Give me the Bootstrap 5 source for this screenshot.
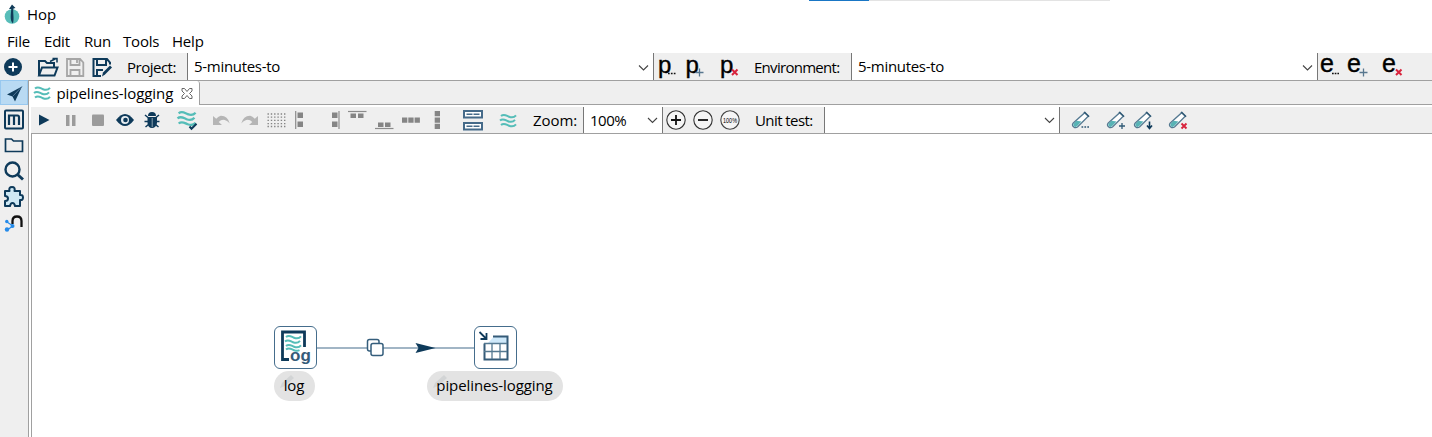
<!DOCTYPE html>
<html lang="en">
<head>
<meta charset="utf-8">
<title>Hop</title>
<link href="https://cdn.jsdelivr.net/npm/bootstrap@5.3.0/dist/css/bootstrap.min.css" rel="stylesheet">
<style>
:root{--navy:#0e3a5a;--teal:#5cc0bc;--bar:#efefef;--line:#a0a0a0}
body{font:15px/20px "Open Sans","Noto Sans",sans-serif;color:#000;height:437px;overflow:hidden;background:#fff}
svg{display:block;overflow:visible;stroke-width:2}
.titlebar{height:28px;position:relative}
.loading{position:absolute;left:809px;top:0;width:301px;height:1px;background:#e3e3e3}
.loading div{width:60px;height:1px;background:#1976c5}
.app-title{padding-left:7px;line-height:29px}
.menu{height:25px;padding-left:7px;letter-spacing:-.2px}
.menu span{line-height:26px;width:40px}
.menu .m1{width:37px}.menu .m3{width:39px}.menu .m4{width:49px}
.main-tools{height:27px;background:var(--bar);display:grid;grid-template-columns:31px 31px 27px 38px 60px 467px 27px 27px 46px 97px 467px 27px 27px 60px}
.tools{height:26px;background:var(--bar);display:grid;grid-template-columns:27px 27px 27px 27px 27px 40px 27px 27px 27px 27px 27px 27px 27px 27px 27px 36px 36px 12px 50px 80px 27px 27px 38px 69px 236px 40px 27px 27px 40px}
.label{line-height:28px;white-space:nowrap}
.tools .label{line-height:27px}
.t1{letter-spacing:-.5px}.t2{letter-spacing:-.71px}.t3{letter-spacing:-.57px}.t4{letter-spacing:-.3px}.t5{letter-spacing:-.07px}
.combo{background:#fff;border-left:1px solid #777;border-right:1px solid #777;padding:0 5px 0 6px}
.combo span{line-height:27px}
.tools .combo span{line-height:26px}
.side{width:29px;background:var(--bar);border-right:1px solid var(--line)}
.side svg{width:28px;height:26px}
.side .picked{background:#b9daf3;box-shadow:inset 0 0 0 1px #98c8ef;height:25px}
.editor{padding-left:2px;border-top:1px solid var(--line)}
.tabs{height:24px;background:var(--bar);border-bottom:1px solid var(--line);margin-left:-2px;margin-bottom:2px}
.filetab{width:171px;height:24px;background:#fff;border-right:1px solid var(--line);border-top-right-radius:3px}
.tabname{line-height:24px;width:124px;margin-left:-.5px;margin-right:.5px}
.canvas{position:relative;border-top:1px solid var(--line);border-left:1px solid var(--line)}
.hops{position:absolute;left:0;top:0}
.node{position:absolute;width:43px;height:43px;border:1px solid #456d8c;border-radius:6px;background:#fff;top:192px}
.caption{position:absolute;top:237px;height:30px;border-radius:15px;background:#e3e3e3;line-height:29px;text-align:center;white-space:nowrap;letter-spacing:-.1px}
.caption svg{position:absolute;left:4px;top:2px}
.caption span{position:relative;left:-.5px}
.n1{left:242px}.n2{left:442px}
.c1{left:242px;width:41px}.c2{left:395px;width:136px}
.f{fill:var(--navy)}.s{fill:none;stroke:var(--navy)}
.piece{fill:#cfe9f5}
.g{fill:#9b9b9b}.gs{fill:none;stroke:#8b8b8b;stroke-width:1.2}
.big{font-family:"Liberation Sans",sans-serif}
.glyph{stroke:#000;stroke-width:.4px}
</style>
</head>
<body class="d-flex flex-column">
<svg width="0" height="0" class="position-absolute">
  <defs>
    <g id="waves" fill="none" stroke="#55bdb8" stroke-width="2"><path d="M1 2.500c3-2.500 5-.5 8 .7s5 1 7-1.300M0 7c3-2.500 5-.5 8 .7s5 1 7-1.300M1 11.500c3-2.500 5-.5 8 .7s5 1 7-1.300"/></g>
    <g id="tube"><path d="M13 1l3.500 3.500L5.500 15.500q-2 1.500-4-.3t-.2-3.700z" fill="#fff" stroke="#557991" stroke-width="1.300"/><path d="M4.500 9.300l5 .7L5 14.800q-1.500 1.200-3 0t-.2-2.700z" fill="#58b3b5"/><path d="M12 .5l5 4.700" stroke="#315a76" stroke-width="1.500"/></g>
    <path id="chev" d="M0 0l4.500 4.500L9 0" fill="none" stroke="#444" stroke-width="1.100"/>
    <path id="pencil" d="M2 15l2-5 9-8 3 3-9 8zM5 10l3 3" fill="#d2d4d5"/>
  </defs>
</svg>
<header class="titlebar d-flex">
  <svg width="20" height="28" viewBox="0 0 20 28"><circle cx="12" cy="16.500" r="7.300" fill="#58bdb9"/><path d="M9 9L12 4.500l3.500 3.500-2 .5c-1 4 1 9-.5 15-3.500-3-2-9.500-1.800-14.500z" fill="#113b59"/></svg>
  <span class="app-title">Hop</span>
  <div class="loading"><div></div></div>
</header>
<nav class="menu d-flex"><span class="m1">File</span><span>Edit</span><span class="m3">Run</span><span class="m4">Tools</span><span>Help</span></nav>
<div class="main-tools">
  <svg width="31" height="27" viewBox="0 53 31 27"><circle class="f" cx="13" cy="67" r="9"/><path d="M13 62.500v9M8.500 67h9" stroke="#fff" stroke-width="2"/></svg>
  <svg width="31" height="27" viewBox="31 53 31 27"><path class="s" d="M39 75V61h6l2 2h7v4M39 75.500l3-8h15.500l-3 8z"/><path class="s" d="M50 61.500l6-3M52.500 58.500H57v4" stroke-width="1.500"/></svg>
  <svg width="27" height="27" viewBox="62 53 27 27"><path d="M67 59h13l3.300 3.500V76H67zM70.500 59v6h9v-6M70.500 76v-6h9v6M77 60v3" fill="none" stroke="#a5a5a5" stroke-width="1.800"/></svg>
  <svg width="38" height="27" viewBox="89 53 38 27"><path class="s" d="M101 76h-7.500V59H107l3 3.500v2M97 59v6h9v-6M97 76v-6h6"/><path d="M102 76.500l1-4 7-7 2 2-7 7z" class="f"/></svg>
  <span class="label t1">Project:</span>
  <div class="combo d-flex justify-content-between"><span class="t4">5-minutes-to</span><svg width="9" height="27"><use href="#chev" y="12.500"/></svg></div>
  <svg width="27" height="27" viewBox="654 53 27 27"><text x="658" y="72.500" class="big glyph" font-size="24">p</text><path d="M668 73.500h8" stroke="#111" stroke-width="1.500" stroke-dasharray="1.700 1.200"/></svg>
  <svg width="27" height="27" viewBox="681 53 27 27"><text x="685.500" y="72.500" class="big glyph" font-size="24">p</text><path d="M695.500 72.500h8M699.500 68.500v8" stroke="#58778f" stroke-width="1.300"/></svg>
  <svg width="46" height="27" viewBox="708 53 46 27"><text x="720" y="72.500" class="big glyph" font-size="24">p</text><path d="M732 69.500l5.500 5.500m0-5.500L732 75" stroke="#d8243d" stroke-width="2"/></svg>
  <span class="label t2">Environment:</span>
  <div class="combo d-flex justify-content-between"><span class="t4">5-minutes-to</span><svg width="9" height="27"><use href="#chev" y="12.500"/></svg></div>
  <svg width="27" height="27" viewBox="1318 53 27 27"><text x="1320" y="72" class="big glyph" font-size="25">e</text><path d="M1332 73.500h7" stroke="#111" stroke-width="1.500" stroke-dasharray="1.700 1"/></svg>
  <svg width="27" height="27" viewBox="1345 53 27 27"><text x="1347" y="72" class="big glyph" font-size="25">e</text><path d="M1359.500 72.500h8M1363.500 68.500v8" stroke="#58778f" stroke-width="1.300"/></svg>
  <svg width="60" height="27" viewBox="1372 53 60 27"><text x="1382" y="72" class="big glyph" font-size="25">e</text><path d="M1396 69.500l5.500 5.500m0-5.500l-5.500 5.500" stroke="#d8243d" stroke-width="2"/></svg>
</div>
<div class="d-flex flex-grow-1">
  <aside class="side d-flex flex-column">
    <svg class="picked" viewBox="0 80 28 25"><path class="f" d="M22 86.500l-7 15-2.500-5-5.500-2z"/><path d="M13 96l9-9.500" stroke="#55799a" stroke-width="1"/></svg>
    <svg viewBox="0 105 28 26"><rect class="s" x="5" y="110.500" width="18" height="18" rx="1"/><path class="s" d="M9 125v-9.500h8.500q1.500 0 1.500 2v7.500M14 115v10" stroke-width="2.200"/></svg>
    <svg viewBox="0 131 28 26"><path class="s" d="M5.500 140v11.500h17V141h-9l-2-2h-6z" stroke-width="1.700"/></svg>
    <svg viewBox="0 157 28 26"><circle class="s" cx="12.500" cy="169.500" r="7" stroke-width="2.400"/><path class="s" d="M17.500 174.500l5.500 5" stroke-width="3"/></svg>
    <svg viewBox="0 183 28 26"><path class="s piece" stroke-linejoin="round" d="M5 191h4.500q-1-4 2.500-4t2.500 4H20v4q3-.5 3 2.500t-3 2.500v6h-5q-.5-3-2.500-3t-2.500 3H5v-5q3 0 3-2.500T5 196z"/></svg>
    <svg viewBox="0 209 28 26"><path d="M12.500 224v-3q0-4.500 4.500-4.500t4.500 4.500v6" fill="none" stroke="#111" stroke-width="2.300"/><path d="M7 222l6 4-6 4" fill="none" stroke="#258bea" stroke-width="1.200"/><circle cx="6.800" cy="221.500" r="1.700" fill="#258bea"/><circle cx="12.500" cy="226" r="2" fill="#258bea"/><circle cx="7" cy="229.500" r="2.200" fill="#258bea"/></svg>
  </aside>
  <main class="editor flex-grow-1 d-flex flex-column">
    <div class="tabs"><div class="filetab d-flex">
      <svg width="28" height="23" viewBox="29 81 28 23"><use href="#waves" x="34" y="86"/></svg>
      <span class="tabname t5">pipelines-logging</span>
      <svg width="12" height="23" viewBox="181 81 12 23"><path d="M182 88.500h2.500l2.500 3 2.500-3h2.500v2.500l-2.500 2.500 2.500 2.500v2.500h-2.500l-2.500-3-2.500 3H182V96l2.500-2.500L182 91z" fill="#fff" stroke="#666" stroke-width="1"/></svg>
    </div></div>
    <div class="tools">
      <svg width="27" height="26" viewBox="31 107 27 26"><path class="f" d="M39 114.500l10.500 5.500-10.500 5.500z"/></svg>
      <svg width="27" height="26" viewBox="58 107 27 26"><path class="g" d="M66 115h3.500v11H66zM72 115h3.500v11H72z"/></svg>
      <svg width="27" height="26" viewBox="85 107 27 26"><rect class="g" x="92" y="114.500" width="12" height="11.500" rx="1"/></svg>
      <svg width="27" height="26" viewBox="112 107 27 26"><path class="f" d="M116 120q9-12 18 0-9 12-18 0z"/><circle cx="125" cy="120" r="4" fill="#e8eef2"/><circle cx="125.500" cy="120" r="2.300" class="f"/></svg>
      <svg width="27" height="26" viewBox="139 107 27 26"><path class="f" d="M147.500 117h9.500v6q-1 5-5 5t-4.500-5zM148 116q0-4 4-4t4 4z"/><path class="s" d="M145 115l3 2.500M159 115l-3 2.500M144.500 121.500h15M145.500 127l3-2.500M158.500 127l-3-2.500" stroke-width="1.500"/><path d="M152.200 118v9" stroke="#89a0af" stroke-width="1"/></svg>
      <svg width="40" height="26" viewBox="166 107 40 26"><g transform="translate(177.500 110.500) scale(1.130)"><use href="#waves"/></g><path class="s" d="M189.500 126.500l2 2.200 5-5"/></svg>
      <svg width="27" height="26" viewBox="206 107 27 26"><path d="M213 116v9h9l-3.300-3q5-5 11 1.500-2-8-9-7.800-2 .3-4.500 3z" fill="#b5b5b5"/></svg>
      <svg width="27" height="26" viewBox="233 107 27 26"><path d="M258 116v9h-9l3.300-3q-5-5-11 1.500 2-8 9-7.800 2 .3 4.500 3z" fill="#b5b5b5"/></svg>
      <svg width="27" height="26" viewBox="260 107 27 26"><path d="M267.500 114h18M267.500 117.200h18M267.500 120.400h18M267.500 123.600h18M267.500 126.500h18" stroke="#848484" stroke-width="1.300" stroke-dasharray="1.400 1.900"/></svg>
      <svg width="27" height="26" viewBox="287 107 27 26"><path class="gs" d="M295.700 111v18"/><path fill="#858585" d="M297.500 112.500h5.500v5.500h-5.500zM297.500 121.500h5.500v5.500h-5.500z"/></svg>
      <svg width="27" height="26" viewBox="314 107 27 26"><path class="gs" d="M339 111v18"/><path fill="#858585" d="M332 112.500h5.500v5.500H332zM332 121.500h5.500v5.500H332z"/></svg>
      <svg width="27" height="26" viewBox="341 107 27 26"><path class="gs" d="M348 111.500h18.500"/><path fill="#858585" d="M350.500 113.500h5.500v4.500h-5.500zM358 113.500h5.500v4.500H358z"/></svg>
      <svg width="27" height="26" viewBox="368 107 27 26"><path class="gs" d="M375 128.500h18.500"/><path fill="#858585" d="M378 122.500h5.500v4.500H378zM385 122.500h5.500v4.500H385z"/></svg>
      <svg width="27" height="26" viewBox="395 107 27 26"><path fill="#858585" d="M402 117.500h5.300v5.300H402zM408.300 117.500h5.300v5.300h-5.300zM414.600 117.500h5.300v5.300h-5.300z"/></svg>
      <svg width="27" height="26" viewBox="422 107 27 26"><path fill="#858585" d="M434.700 111h5.300v5.300h-5.300zM434.700 117.400h5.300v5.300h-5.300zM434.700 123.800h5.300v5.300h-5.300z"/></svg>
      <svg width="36" height="26" viewBox="449 107 36 26"><path d="M464 111h18v6.500h-18zM464 123h18v6.500h-18z" fill="#fff" stroke="#456a89" stroke-width="2"/><path d="M466.500 114.300h13M466.500 126.300h13" stroke="#456a89" stroke-width="1.600" stroke-dasharray="6 1"/></svg>
      <svg width="36" height="26" viewBox="485 107 36 26"><use href="#waves" x="500" y="113.500"/></svg>
      <span></span>
      <span class="label t5">Zoom:</span>
      <div class="combo d-flex justify-content-between"><span class="t1">100%</span><svg width="9" height="26"><use href="#chev" y="11"/></svg></div>
      <svg width="27" height="26" viewBox="663 107 27 26"><circle cx="676" cy="120" r="9.200" fill="#f5f5f5" stroke="#333" stroke-width="1.100"/><path d="M676 115v10M671 120h10" stroke="#111" stroke-width="1.800"/></svg>
      <svg width="27" height="26" viewBox="690 107 27 26"><circle cx="703" cy="120" r="9.200" fill="#f5f5f5" stroke="#333" stroke-width="1.100"/><path d="M698 120h10" stroke="#111" stroke-width="1.800"/></svg>
      <svg width="38" height="26" viewBox="717 107 38 26"><circle cx="730" cy="120" r="9.200" fill="#f5f5f5" stroke="#444" stroke-width="1.100"/><text x="723" y="122.500" font-size="7.500" textLength="14" lengthAdjust="spacingAndGlyphs" class="big">100%</text></svg>
      <span class="label t3">Unit test:</span>
      <div class="combo d-flex justify-content-end"><svg width="9" height="26"><use href="#chev" y="11"/></svg></div>
      <svg width="40" height="26" viewBox="1060 107 40 26"><use href="#tube" x="1072" y="111.500"/><path d="M1081.500 127h8" stroke="#315a76" stroke-width="1.700" stroke-dasharray="1.700 1.200"/></svg>
      <svg width="27" height="26" viewBox="1100 107 27 26"><use href="#tube" x="1107" y="111.500"/><path d="M1119 126h6M1122 123v6" stroke="#315a76" stroke-width="1.300"/></svg>
      <svg width="27" height="26" viewBox="1127 107 27 26"><use href="#tube" x="1134" y="111.500"/><path d="M1149.500 121.500v6M1147 125.500l2.500 3 2.500-3" class="s" stroke-width="1.600"/></svg>
      <svg width="40" height="26" viewBox="1154 107 40 26"><use href="#tube" x="1169" y="111.500"/><path d="M1181.500 123.500l5 5m0-5l-5 5" stroke="#d8243d" stroke-width="1.900"/></svg>
    </div>
    <div class="canvas flex-grow-1">
      <svg class="hops" width="560" height="280" viewBox="32 134 560 280"><path d="M316 348h158" stroke="#456d8c" stroke-width="1.200"/><path class="f" d="M415.500 343l20 5-20 5 3-5z"/><rect x="367.500" y="339.500" width="11.500" height="11.500" rx="2" fill="#fff" stroke="#355e7c" stroke-width="1.500"/><rect x="371" y="343.500" width="12" height="12" rx="2" fill="#fff" stroke="#355e7c" stroke-width="1.500"/></svg>
      <div class="node n1"><svg width="41" height="41" viewBox="275 327 41 41"><path class="s" d="M289 359.500h-6.500V332h22v15" stroke-width="2.800"/><g transform="translate(285 334.500)"><use href="#waves"/></g><path d="M286 349.500c3-2.500 5-.5 8 .7s3.500 1 5.500 0" fill="none" stroke="#55bdb8" stroke-width="2"/><text x="290" y="360.500" class="big" font-size="17" font-weight="700" fill="#355b78">og</text></svg></div>
      <div class="node n2"><svg width="41" height="41" viewBox="475 327 41 41"><path d="M494 336.500h13.500v7h-20z" fill="#cfe9fa"/><path d="M484.500 343.500v16h23v-23H493" fill="none" stroke="#355b78" stroke-width="2"/><path d="M484 343.500h23M484 351.500h23M492 344v15M500 344v15" stroke="#557991" stroke-width="1.300"/><path class="s" d="M479.500 332l6.500 6.500M486.500 333v6h-6" stroke-width="1.800"/></svg></div>
      <div class="caption c1"><svg width="18" height="18"><use href="#pencil"/></svg><span>log</span></div>
      <div class="caption c2"><svg width="18" height="18"><use href="#pencil"/></svg><span>pipelines-logging</span></div>
    </div>
  </main>
</div>
<script src="https://cdn.jsdelivr.net/npm/bootstrap@5.3.0/dist/js/bootstrap.bundle.min.js"></script>
</body>
</html>
